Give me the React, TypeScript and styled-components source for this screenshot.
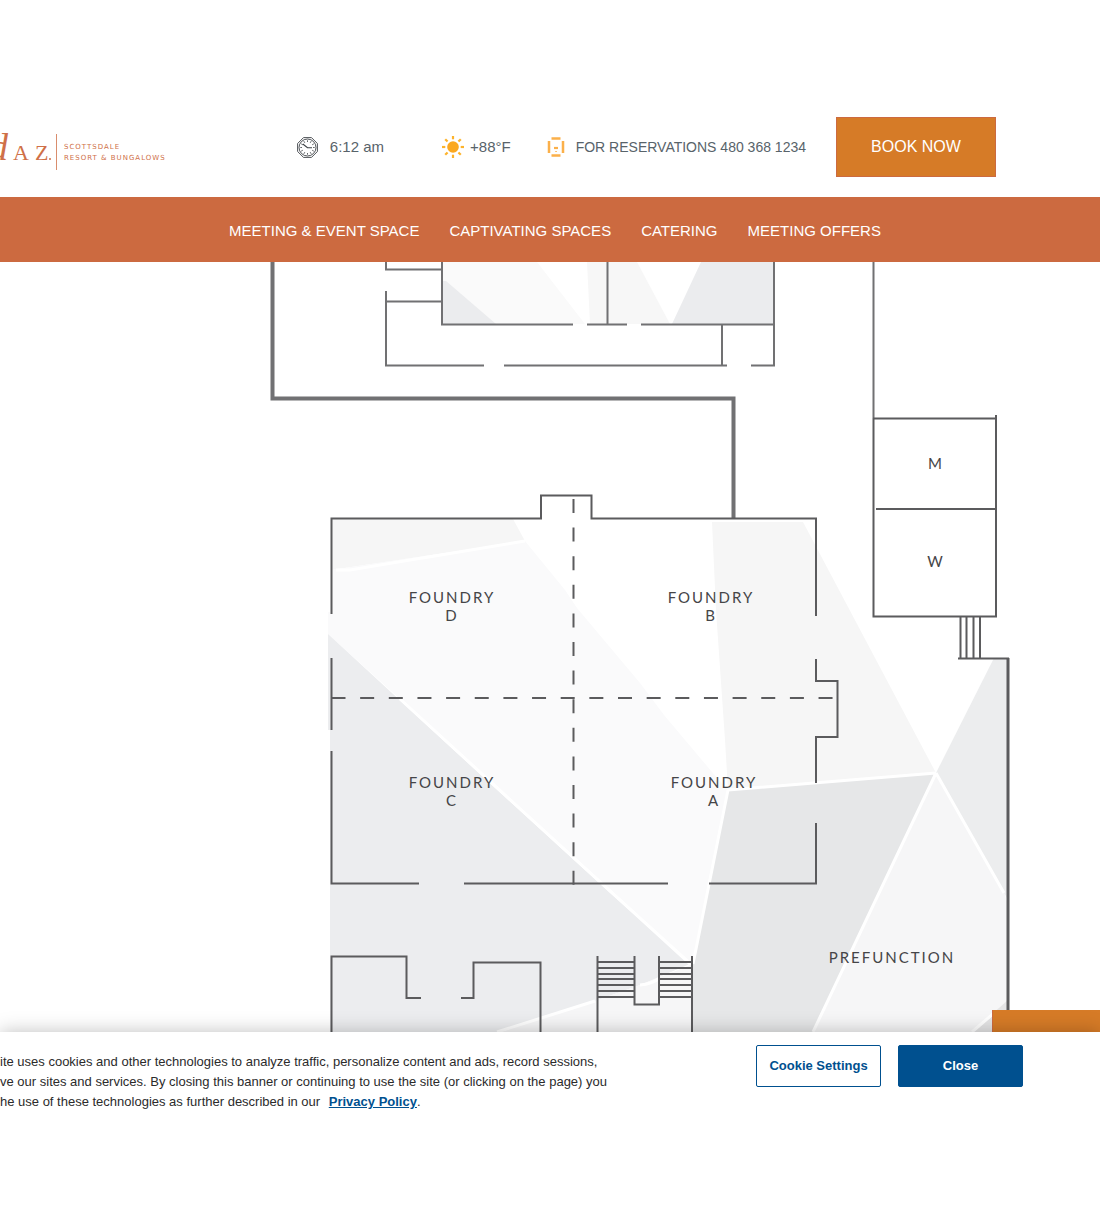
import React from "react";
import styled, { createGlobalStyle } from "styled-components";

const GlobalStyle = createGlobalStyle`
  *, *::before, *::after { box-sizing: border-box; }
  body {
    margin: 0;
    background: #fff;
    color: #55606a;
    font-family: "Liberation Sans", Arial, Helvetica, sans-serif;
    overflow-x: hidden;
  }
`;

const Page = styled.div`
  min-height: 100vh;
  display: flex;
  flex-direction: column;
  overflow: hidden;
`;

const Header = styled.header`
  display: flex;
  align-items: center;
  padding: 117px 104px 20px 0;
`;

const Logo = styled.a`
  display: block;
  margin-right: auto;
  line-height: 0;
`;

const Info = styled.div<{ $gap: number; $after: number; $size?: number }>`
  display: flex;
  align-items: center;
  gap: ${(p) => p.$gap}px;
  margin-right: ${(p) => p.$after}px;
  font-size: ${(p) => p.$size ?? 15}px;
  line-height: 20px;
  color: #58636a;
  white-space: nowrap;

  svg { flex: none; }
`;

const BookButton = styled.button`
  width: 160px;
  height: 60px;
  border: 1px solid #cc6a40;
  background: #d67b27;
  color: #fff;
  font: 16px/20px "Liberation Sans", Arial, sans-serif;
  cursor: pointer;
`;

const Nav = styled.nav`
  display: flex;
  justify-content: center;
  gap: 30px;
  padding: 24px 0 21px 10px;
  background: #cc6a40;
`;

const NavLink = styled.a`
  color: #fff;
  font-size: 15px;
  line-height: 20px;
  text-decoration: none;
  white-space: nowrap;
`;

const PlanArea = styled.main`
  position: relative;
`;

const Plan = styled.svg`
  display: block;
  width: 100%;
  height: auto;

  text {
    font-family: Lato, "Open Sans", sans-serif;
    font-size: 15px;
    letter-spacing: 2px;
    fill: #454547;
    text-anchor: middle;
  }
`;

const Floating = styled.button`
  position: absolute;
  right: 0;
  bottom: 0;
  width: 108px;
  height: 22px;
  padding: 0;
  border: 0;
  border-left: 1px solid #cc6a40;
  background: #d67b27;
`;

const Banner = styled.section`
  position: relative;
  flex: 1;
  display: flex;
  align-items: flex-start;
  justify-content: space-between;
  padding: 13px 77px 116px 0;
  background: #fff;
  box-shadow: 0 0 18px rgba(0, 0, 0, 0.25);
`;

const Notice = styled.p`
  margin: 0;
  padding-top: 7px;
  color: #2b2b2b;
  font-size: 13px;
  line-height: 20px;
  white-space: nowrap;
`;

const PolicyLink = styled.a`
  margin-left: 5px;
  color: #00508f;
  font-weight: 700;
`;

const Actions = styled.div`
  display: flex;
  gap: 17px;
`;

const ActionButton = styled.button<{ $solid?: boolean }>`
  width: 125px;
  height: 42px;
  padding: 0;
  border: 1px solid #00508f;
  border-radius: 2px;
  background: ${(p) => (p.$solid ? "#00508f" : "#fff")};
  color: ${(p) => (p.$solid ? "#fff" : "#00508f")};
  font: 700 13px/20px "Liberation Sans", Arial, sans-serif;
  white-space: nowrap;
  cursor: pointer;
`;

const LogoMark = () => (
  <svg width="172" height="60" viewBox="0 0 172 60" aria-label="Andaz Scottsdale Resort & Bungalows">
    <g fill="#cf7048">
      <text x="-11" y="43" fontFamily="Liberation Serif, serif" fontStyle="italic" fontSize="38">d</text>
      <text x="13" y="43" fontFamily="Liberation Serif, serif" fontSize="22">A</text>
      <text x="35" y="43" fontFamily="Liberation Serif, serif" fontSize="22">Z</text>
      <circle cx="50" cy="42" r="1" />
      <rect x="56" y="17" width="1" height="36" opacity="0.8" />
      <text x="64" y="32" fontFamily="DejaVu Sans, sans-serif" fontSize="7" letterSpacing="1">SCOTTSDALE</text>
      <text x="64" y="43" fontFamily="DejaVu Sans, sans-serif" fontSize="7" letterSpacing="1">RESORT &amp; BUNGALOWS</text>
    </g>
  </svg>
);

const CLOCK_TICKS = [0, 30, 60, 90, 120, 150, 180, 210, 240, 270, 300, 330];

const ClockIcon = () => (
  <svg width="21" height="21" viewBox="0 0 21 21" fill="none" stroke="#3c4145" aria-hidden="true">
    <path d="M6.500 0.600h8l5.900 5.900v8l-5.900 5.900h-8l-5.900-5.900v-8z" strokeWidth="0.900" />
    <circle cx="10.500" cy="10.500" r="8.500" strokeWidth="0.900" />
    {CLOCK_TICKS.map((a) => (
      <path key={a} d="M10.500 3.300v1.700" strokeWidth="0.800" transform={`rotate(${a} 10.500 10.500)`} />
    ))}
    <path d="M5.800 7l4.700 3.800h4.500" strokeWidth="1.100" />
  </svg>
);

const SunIcon = () => (
  <svg width="24" height="24" viewBox="0 0 24 24" aria-hidden="true">
    <circle cx="12" cy="12" r="5.800" fill="#fba81f" />
    {[0, 45, 90, 135, 180, 225, 270, 315].map((a) => (
      <path key={a} d="M12 1v3.300" stroke="#fdb32b" strokeWidth="2.200" transform={`rotate(${a} 12 12)`} />
    ))}
  </svg>
);

const PhoneIcon = () => (
  <svg width="18" height="20" viewBox="0 0 18 20" fill="none" stroke="#fbb04a" aria-hidden="true">
    <path d="M4.500 1.500h9M4.500 18.500h9M2 4v12M16 4v12" strokeWidth="2.500" />
    <path d="M7 11h4" strokeWidth="2.200" />
    <path d="M8.300 14.500h1.500" strokeWidth="1.200" />
  </svg>
);

const STAIR_ROWS = [962, 968, 974, 979, 985, 991, 997];

const FloorPlan = () => (
  <Plan viewBox="0 262 1100 770" role="img" aria-label="Foundry floor plan">
    {/* upper room shading */}
    <path d="M442 262H537L585 324H442z" fill="#fafafa" />
    <path d="M446 281L496 324H442V281z" fill="#ebecee" />
    <path d="M587 262H637L670 324H590z" fill="#f7f7f7" />
    <path d="M701 262H773V324H672z" fill="#ebecee" />

    {/* ballroom and prefunction shading */}
    <path d="M331 519H513L525 541L331 570z" fill="#f6f6f6" />
    <path d="M331 570L525 541L565 590L577 608L640 683L664 715L712 772L728 790L693 964L328 634V612H331z" fill="#fafafb" />
    <path d="M328 634L495 788L610 893L690 964L640 985L595 1001L497 1032H330V730H328z" fill="#ecedef" />
    <path d="M497 1032L595 1001L640 985L693 964V1032z" fill="#f6f6f7" />
    <path d="M712 522H803L936 773L728 790L725 740L716 610z" fill="#f6f6f6" />
    <path d="M728 790L936 773L813 1032H693V964z" fill="#e6e7e8" />
    <path d="M936 773L1005 895L1008 905V1032H813z" fill="#f6f6f7" />
    <path d="M994 658H1008V900L936 773z" fill="#ecedee" />
    <path d="M972 1032L1008 1000V1032z" fill="#e4e4e5" />
    <path
      d="M336 570H350L525 541M400 699L690 964M497 1032L595 1001M640 985Q652 984 660 978M728 790L936 773M728 790L693 964M936 773L813 1032M936 773L1004 893M972 1032L994 1013"
      fill="none"
      stroke="#fff"
      strokeWidth="3"
    />

    {/* upper walls */}
    <g fill="none" stroke="#717173" strokeWidth="2">
      <path d="M272.500 262V398.500H733.500V518" strokeWidth="4" />
      <path d="M386 262V269.500H441M386 291V365.500H484M386 301.500H441" />
      <path d="M442 262V324.500H573M587 324.500H627M641 324.500H774M607.500 262V324" />
      <path d="M774 262V365.500H751M722 325V365M504 365.500H727M873.500 262V418" />
    </g>

    {/* ballroom walls */}
    <g fill="none" stroke="#5b5b5d" strokeWidth="2">
      <path d="M331.500 614V518.500H541V495.500H591.500V518.500H816V616" />
      <path d="M331.500 658V730M331.500 751V883.500H419M464 883.500H668M709 883.500H816V823" />
      <path d="M816 659V681H837.500V737H816V783" />
      <path d="M331.500 1032V956.500H406.500V998H421M461 998H473.500V962.500H540.500V1032" />
      <path d="M873.500 418V616.500H996V415M873 418.500H996M876 509H996" />
      <path d="M960.500 617V658M966.500 617V658M973.500 617V658M980 617V658M958 658.500H1009" />
      <path d="M1008 658V1032" strokeWidth="3" />
      <path d="M573.500 499V885" strokeDasharray="14 14.600" />
      <path d="M331.500 698H833" strokeDasharray="14 14.650" />
      <path d="M597.500 956V1032M634.500 956V1004.500H659V956M692 956V1032" />
      {STAIR_ROWS.map((y) => (
        <path key={y} d={`M598 ${y}H634M659 ${y}H692`} />
      ))}
    </g>

    <text x="452" y="603">FOUNDRY</text>
    <text x="452" y="621">D</text>
    <text x="711" y="603">FOUNDRY</text>
    <text x="711" y="621">B</text>
    <text x="452" y="788">FOUNDRY</text>
    <text x="452" y="806">C</text>
    <text x="714" y="788">FOUNDRY</text>
    <text x="714" y="806">A</text>
    <text x="892" y="963">PREFUNCTION</text>
    <text x="936" y="469">M</text>
    <text x="936" y="567">W</text>
  </Plan>
);

const NAV_ITEMS = ["MEETING & EVENT SPACE", "CAPTIVATING SPACES", "CATERING", "MEETING OFFERS"];

export default function App() {
  return (
    <Page>
      <GlobalStyle />
      <Header>
        <Logo href="#"><LogoMark /></Logo>
        <Info $gap={12} $after={57}><ClockIcon />6:12 am</Info>
        <Info $gap={5} $after={36}><SunIcon />+88°F</Info>
        <Info $gap={11} $after={30} $size={14}><PhoneIcon />FOR RESERVATIONS 480 368 1234</Info>
        <BookButton type="button">BOOK NOW</BookButton>
      </Header>
      <Nav>
        {NAV_ITEMS.map((item) => (
          <NavLink key={item} href="#">{item}</NavLink>
        ))}
      </Nav>
      <PlanArea>
        <FloorPlan />
        <Floating type="button" aria-label="Open panel" />
      </PlanArea>
      <Banner aria-label="Cookie notice">
        <Notice>
          ite uses cookies and other technologies to analyze traffic, personalize content and ads, record sessions,
          <br />
          ve our sites and services. By closing this banner or continuing to use the site (or clicking on the page) you
          <br />
          he use of these technologies as further described in our <PolicyLink href="#">Privacy Policy</PolicyLink>.
        </Notice>
        <Actions>
          <ActionButton type="button">Cookie Settings</ActionButton>
          <ActionButton type="button" $solid>Close</ActionButton>
        </Actions>
      </Banner>
    </Page>
  );
}
